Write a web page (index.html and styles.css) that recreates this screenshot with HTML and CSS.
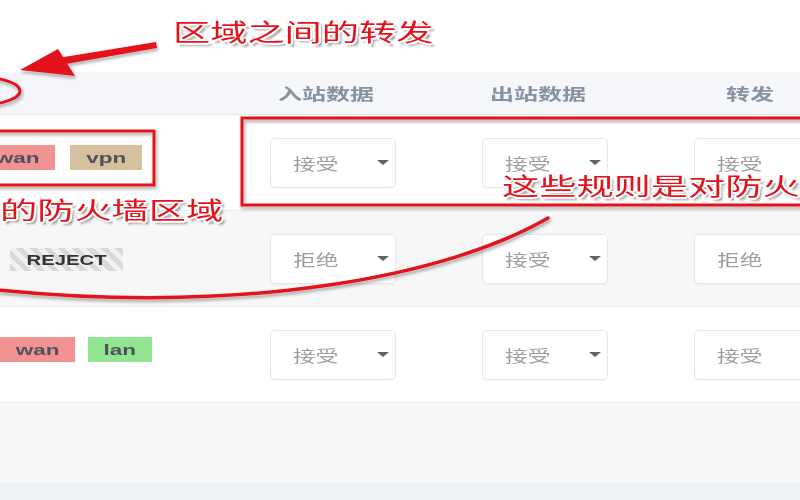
FILE: index.html
```html
<!DOCTYPE html>
<html lang="zh-CN">
<head>
<meta charset="utf-8">
<title>防火墙区域</title>
<link rel="stylesheet" href="styles.css">
</head>
<body>
<div class="page">
  <div class="top"></div>
  <div class="table">
    <div class="row head">
      <div class="cell"></div>
      <div class="cell th"><span class="sx">入站数据</span></div>
      <div class="cell th"><span class="sx">出站数据</span></div>
      <div class="cell th"><span class="sx">转发</span></div>
    </div>
    <div class="row">
      <div class="cell zone">
        <span class="tag wan cut"><span class="sx">wan</span></span>
        <span class="tag vpn"><span class="sx">vpn</span></span>
      </div>
      <div class="cell"><div class="select"><span class="sx">接受</span><i class="caret"></i></div></div>
      <div class="cell"><div class="select"><span class="sx">接受</span><i class="caret"></i></div></div>
      <div class="cell"><div class="select wide"><span class="sx">接受</span><i class="caret"></i></div></div>
    </div>
    <div class="row alt">
      <div class="cell zone mid">
        <span class="reject"><span class="sx">REJECT</span></span>
      </div>
      <div class="cell"><div class="select"><span class="sx">拒绝</span><i class="caret"></i></div></div>
      <div class="cell"><div class="select"><span class="sx">接受</span><i class="caret"></i></div></div>
      <div class="cell"><div class="select wide"><span class="sx">拒绝</span><i class="caret"></i></div></div>
    </div>
    <div class="row">
      <div class="cell zone">
        <span class="tag wan"><span class="sx">wan</span></span>
        <span class="tag lan"><span class="sx">lan</span></span>
      </div>
      <div class="cell"><div class="select"><span class="sx">接受</span><i class="caret"></i></div></div>
      <div class="cell"><div class="select"><span class="sx">接受</span><i class="caret"></i></div></div>
      <div class="cell"><div class="select wide"><span class="sx">接受</span><i class="caret"></i></div></div>
    </div>
  </div>
  <div class="filler"></div>
  <div class="footer"></div>
</div>

<svg class="marks" width="800" height="500" viewBox="0 0 800 500">
  <g fill="none" stroke="#e3121b" stroke-width="3">
    <rect x="-10" y="131" width="164" height="54"/>
    <rect x="242" y="118" width="620" height="87"/>
    <ellipse cx="-30" cy="91" rx="50" ry="15"/>
    <path d="M548 218 C 450 275 250 315 -2 290" stroke-width="3.5" stroke-linecap="round"/>
  </g>
  <polygon points="156,42 157,48 66,64 58,58" fill="#e3121b"/>
  <polygon points="20,70 58,49 75,76" fill="#e3121b"/>
</svg>

<div class="note n1"><span class="sx">区域之间的转发</span></div>
<div class="note n2"><span class="sx">的防火墙区域</span></div>
<div class="note n3"><span class="sx">这些规则是对防火</span></div>
</body>
</html>
```

FILE: styles.css
```css
html, body {
  margin: 0;
  padding: 0;
  width: 800px;
  height: 500px;
  overflow: hidden;
  background: #ffffff;
  font-family: "Noto Sans CJK SC", "Noto Sans", sans-serif;
}

.page {
  position: relative;
  width: 800px;
  height: 500px;
  overflow: hidden;
  display: flex;
  flex-direction: column;
}

.top {
  height: 72px;
  background: #ffffff;
  flex: none;
}

.table {
  flex: none;
}

.row {
  display: grid;
  grid-template-columns: 220px 212px 212px 212px;
  width: 856px;
  height: 96px;
  box-sizing: border-box;
  border-bottom: 1px solid #ececec;
  background: #ffffff;
}

.row.alt {
  background: #f7f7f7;
}

.row.head {
  height: 43px;
  background: #f4f6f9;
  border-bottom: 1px solid #e6e9ee;
}

.cell {
  display: flex;
  align-items: center;
  padding-left: 50px;
  box-sizing: border-box;
}

.th {
  padding-left: 0;
  justify-content: center;
  font-size: 16px;
  font-weight: 700;
  color: #8691a1;
}

.th .sx {
  transform-origin: center center;
}

.sx {
  display: inline-block;
  transform: scaleX(1.5);
  transform-origin: left center;
  white-space: nowrap;
}

.zone {
  padding-left: 0;
  align-items: flex-start;
  padding-top: 30px;
  gap: 14px;
}

.zone.mid {
  align-items: center;
  padding-top: 0;
}

.tag {
  display: inline-flex;
  align-items: center;
  justify-content: center;
  height: 25px;
  font-family: "Liberation Sans", Arial, sans-serif;
  font-size: 15px;
  font-weight: 700;
  color: #4f4f5e;
}

.tag .sx {
  transform-origin: center center;
}

.tag.wan {
  width: 75px;
  background: #f19393;
}

.tag.wan.cut {
  margin-left: -20px;
}

.tag.vpn {
  width: 72px;
  background: #d6c09e;
  margin-left: 1px;
}

.tag.lan {
  width: 64px;
  background: #8fe68f;
  margin-left: -1px;
}

.reject {
  display: inline-flex;
  align-items: center;
  justify-content: center;
  margin-left: 10px;
  margin-top: 2px;
  width: 113px;
  height: 23px;
  background: repeating-linear-gradient(45deg, #d9d9d9 0 5px, #f1f1f1 5px 10px);
  font-family: "Liberation Sans", Arial, sans-serif;
  font-size: 14px;
  font-weight: 700;
  color: #333333;
}

.reject .sx {
  transform: scaleX(1.45);
  transform-origin: center center;
}

.select {
  display: flex;
  align-items: center;
  justify-content: space-between;
  width: 126px;
  height: 50px;
  box-sizing: border-box;
  padding: 0 6px 0 22px;
  background: #ffffff;
  border: 1px solid #e7e7e7;
  border-radius: 5px;
  box-shadow: 0 1px 2px rgba(0, 0, 0, 0.04);
  font-size: 16px;
  color: #9d9d9d;
}

.select.wide {
  width: 150px;
}

.select .sx {
  transform: scaleX(1.42);
}

.caret {
  width: 0;
  height: 0;
  border-left: 6.5px solid transparent;
  border-right: 6.5px solid transparent;
  border-top: 5px solid #626262;
}

.filler {
  height: 80px;
  background: #f8f8f8;
  flex: none;
}

.footer {
  flex: 1;
  background: #eef1f6;
}

.marks {
  position: absolute;
  left: 0;
  top: 0;
  pointer-events: none;
  overflow: visible;
  filter: drop-shadow(0 0 1px #ffffff) drop-shadow(1.5px 2px 1.5px rgba(0, 0, 0, 0.35));
}

.note {
  position: absolute;
  font-family: "Noto Sans CJK SC", sans-serif;
  font-size: 24px;
  line-height: 1;
  font-weight: 400;
  color: #e3121b;
  white-space: nowrap;
  text-shadow:
    -1px -1px 0 #ffffff, 1px -1px 0 #ffffff, -1px 1px 0 #ffffff, 1px 1px 0 #ffffff,
    0 -1.5px 0 #ffffff, 0 1.5px 0 #ffffff, -1.5px 0 0 #ffffff, 1.5px 0 0 #ffffff,
    2px 2.5px 2px rgba(0, 0, 0, 0.45);
}

.note .sx {
  transform: scaleX(1.55);
}

.n1 { left: 173px; top: 19px; }
.n2 { left: 0; top: 197px; }
.n3 { left: 502px; top: 173px; }
```
